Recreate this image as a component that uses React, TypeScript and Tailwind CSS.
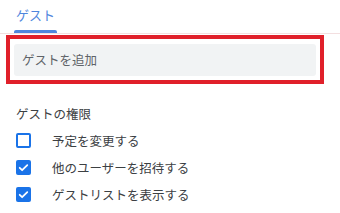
import React from "react";

type Permission = { label: string; checked: boolean };

const permissions: Permission[] = [
  { label: "予定を変更する", checked: false },
  { label: "他のユーザーを招待する", checked: true },
  { label: "ゲストリストを表示する", checked: true },
];

const Checkbox: React.FC<{ checked: boolean }> = ({ checked }) =>
  checked ? (
    <span className="flex h-[15px] w-[15px] items-center justify-center rounded-[2px] bg-[#1a73e8]">
      <svg viewBox="0 0 24 24" className="h-[13px] w-[13px]" fill="none" stroke="white" strokeWidth="3.2" strokeLinecap="round" strokeLinejoin="round">
        <path d="M5 12.5l4.5 4.5L19 7.5" />
      </svg>
    </span>
  ) : (
    <span className="h-[15px] w-[15px] rounded-[2px] border-2 border-[#1a73e8] bg-white" />
  );

export default function App() {
  return (
    <div className="h-[213px] w-[340px] overflow-hidden bg-white font-['Noto_Sans_CJK_JP',sans-serif] text-[#3c4043]">
      {/* Tabs */}
      <div className="flex border-b border-[#f3dfe0] pl-[14px]">
        <div className="flex w-[43px] flex-col items-center">
          <span className="pt-[5px] text-[13px] leading-[20px] text-[#4f86dd]">ゲスト</span>
          <span className="mt-[5px] h-[3px] w-full rounded-t-[2px] bg-[#4f86dd]" />
        </div>
      </div>

      {/* Highlighted guest input */}
      <div className="ml-[6px] mt-[1px] w-[318px] border-[4px] border-[#e0202a] px-[4px] pt-[5px] pb-[4px]">
        <div className="flex h-[32px] items-center rounded-[3px] bg-[#f1f3f4] px-[8px] text-[12.5px] text-[#5f6368]">
          ゲストを追加
        </div>
      </div>

      {/* Permissions */}
      <div className="pl-[16px] pt-[21px]">
        <div className="text-[12.5px] leading-[18px]">ゲストの権限</div>
        <div className="mt-[10px] flex flex-col gap-[12px]">
          {permissions.map((p) => (
            <div key={p.label} className="flex h-[15px] items-center">
              <Checkbox checked={p.checked} />
              <span className="ml-[21px] text-[12.5px] leading-[15px]">{p.label}</span>
            </div>
          ))}
        </div>
      </div>
    </div>
  );
}
